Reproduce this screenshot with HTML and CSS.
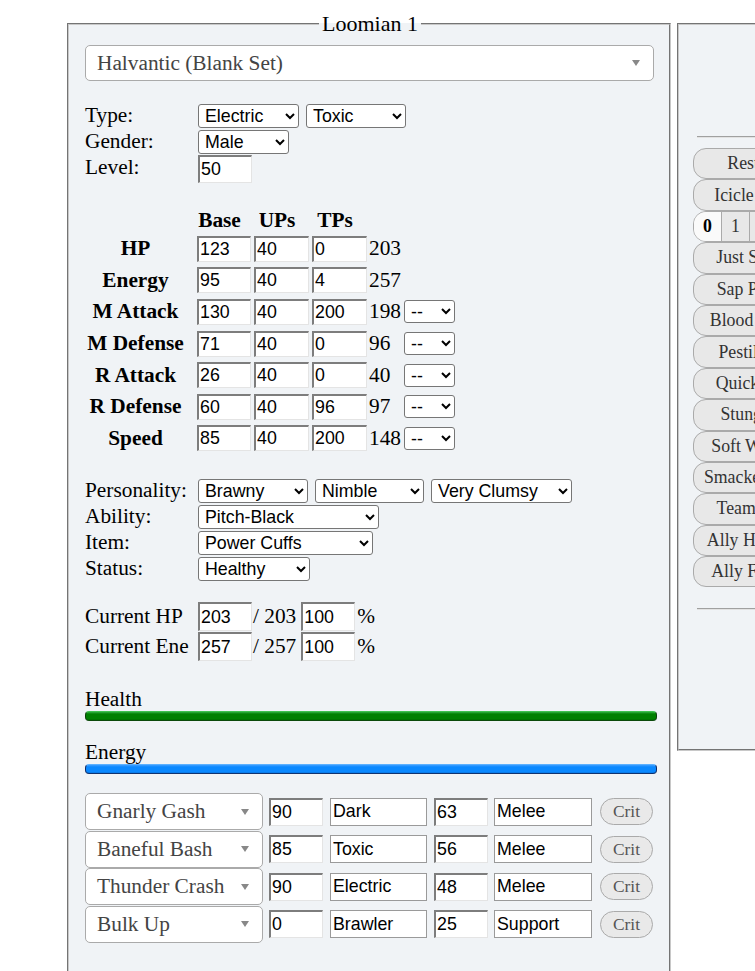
FILE: index.html
```html
<!DOCTYPE html>
<html lang="en">
<head>
<meta charset="utf-8">
<title>Loomian Calc</title>
<link rel="stylesheet" href="styles.css">
</head>
<body>
<div class="page">
  <fieldset class="poke">
    <legend>Loomian 1</legend>
    <div class="set-select"><span>Halvantic (Blank Set)</span><span class="tri"></span></div>

    <div class="info">
      <div class="row"><label>Type:</label><select class="sel w101"><option>Electric</option></select><select class="sel w100"><option>Toxic</option></select></div>
      <div class="row"><label>Gender:</label><select class="sel w91"><option>Male</option></select></div>
      <div class="row"><label>Level:</label><input class="inset lvl" type="text" value="50"></div>
    </div>

    <div class="stats">
      <div></div><div class="hd">Base</div><div class="hd">UPs</div><div class="hd">TPs</div><div></div><div></div>

      <div class="sl">HP</div><input class="inset" value="123"><input class="inset" value="40"><input class="inset" value="0"><div class="tot">203</div><div></div>
      <div class="sl">Energy</div><input class="inset" value="95"><input class="inset" value="40"><input class="inset" value="4"><div class="tot">257</div><div></div>
      <div class="sl">M Attack</div><input class="inset" value="130"><input class="inset" value="40"><input class="inset" value="200"><div class="tot">198</div><select class="sel boost"><option>--</option></select>
      <div class="sl">M Defense</div><input class="inset" value="71"><input class="inset" value="40"><input class="inset" value="0"><div class="tot">96</div><select class="sel boost"><option>--</option></select>
      <div class="sl">R Attack</div><input class="inset" value="26"><input class="inset" value="40"><input class="inset" value="0"><div class="tot">40</div><select class="sel boost"><option>--</option></select>
      <div class="sl">R Defense</div><input class="inset" value="60"><input class="inset" value="40"><input class="inset" value="96"><div class="tot">97</div><select class="sel boost"><option>--</option></select>
      <div class="sl">Speed</div><input class="inset" value="85"><input class="inset" value="40"><input class="inset" value="200"><div class="tot">148</div><select class="sel boost"><option>--</option></select>
    </div>

    <div class="info pers">
      <div class="row"><label>Personality:</label><select class="sel w110"><option>Brawny</option></select><select class="sel w109"><option>Nimble</option></select><select class="sel w141"><option>Very Clumsy</option></select></div>
      <div class="row"><label>Ability:</label><select class="sel w181"><option>Pitch-Black</option></select></div>
      <div class="row"><label>Item:</label><select class="sel w175"><option>Power Cuffs</option></select></div>
      <div class="row"><label>Status:</label><select class="sel w112"><option>Healthy</option></select></div>
    </div>

    <div class="current">
      <div class="crow"><label>Current HP</label><input class="inset cur" value="203"><span class="of">/ 203</span><input class="inset cur" value="100"><span class="pct">%</span></div>
      <div class="crow"><label>Current Ene</label><input class="inset cur" value="257"><span class="of">/ 257</span><input class="inset cur" value="100"><span class="pct">%</span></div>
    </div>

    <div class="barlabel first">Health</div>
    <div class="bar hp"></div>
    <div class="barlabel">Energy</div>
    <div class="bar en"></div>

    <div class="moves">
      <div class="mrow"><div class="msel"><span>Gnarly Gash</span><span class="tri"></span></div><input class="inset bp" value="90"><input class="thin mtype" value="Dark"><input class="inset bp acc" value="63"><input class="thin mcat" value="Melee"><button class="crit">Crit</button></div>
      <div class="mrow"><div class="msel"><span>Baneful Bash</span><span class="tri"></span></div><input class="inset bp" value="85"><input class="thin mtype" value="Toxic"><input class="inset bp acc" value="56"><input class="thin mcat" value="Melee"><button class="crit">Crit</button></div>
      <div class="mrow"><div class="msel"><span>Thunder Crash</span><span class="tri"></span></div><input class="inset bp" value="90"><input class="thin mtype" value="Electric"><input class="inset bp acc" value="48"><input class="thin mcat" value="Melee"><button class="crit">Crit</button></div>
      <div class="mrow"><div class="msel"><span>Bulk Up</span><span class="tri"></span></div><input class="inset bp" value="0"><input class="thin mtype" value="Brawler"><input class="inset bp acc" value="25"><input class="thin mcat" value="Support"><button class="crit">Crit</button></div>
    </div>
  </fieldset>

  <div class="field">
    <hr class="rule top">
    <div class="btns">
      <button class="fbtn">Restore Field</button>
      <button class="fbtn">Icicle Spike Trap</button>
      <div class="seg"><span class="on">0</span><span>1</span><span>2</span><span>3</span><span>4</span><span>5</span></div>
      <button class="fbtn">Just Switched In</button>
      <button class="fbtn">Sap Pod Planted</button>
      <button class="fbtn">Blood Pact Sealed</button>
      <button class="fbtn">Pestilence Field</button>
      <button class="fbtn">Quick Guard Up</button>
      <button class="fbtn">Stung Recently</button>
      <button class="fbtn">Soft Wind Barrier</button>
      <button class="fbtn">Smacked to Ground</button>
      <button class="fbtn">Team Protection</button>
      <button class="fbtn">Ally Helping Hand</button>
      <button class="fbtn">Ally Fainted Turn</button>
    </div>
    <hr class="rule bottom">
  </div>
</div>
</body>
</html>
```

FILE: styles.css
```css
html, body {
  margin: 0;
  padding: 0;
  background: #fff;
  overflow: hidden;
}
body {
  font-family: "Liberation Serif", "Times New Roman", serif;
  font-size: 21.33px;
  color: #000;
}
.page {
  display: flex;
  align-items: flex-start;
  gap: 6px;
  padding: 12px 0 0 67px;
  width: 1300px;
}
fieldset.poke {
  margin: 0;
  width: 604px;
  min-width: 0;
  min-inline-size: 0;
  flex: none;
  min-height: 1020px;
  box-sizing: border-box;
  padding: 9px 14px 40px 16px;
  border: 2px groove #c8c8c8;
  background: #f0f3f6;
}
legend {
  margin: 0 auto;
  padding: 0 3px;
  font-size: 22px;
  line-height: 24px;
}
.set-select, .msel {
  box-sizing: border-box;
  height: 36px;
  border: 1px solid #aaa;
  border-radius: 5px;
  background: #fff;
  color: #444;
  display: flex;
  align-items: center;
  justify-content: space-between;
  padding: 0 13px 0 11px;
}
.set-select {
  width: 569px;
}
.tri {
  width: 0;
  height: 0;
  border-left: 4.5px solid transparent;
  border-right: 4.5px solid transparent;
  border-top: 6px solid #888;
}
.info {
  margin-top: 21.5px;
}
.row, .crow {
  display: flex;
  align-items: center;
  gap: 7px;
  height: 26px;
}
.row label, .crow label {
  width: 106px;
  flex: none;
}
.sel {
  box-sizing: border-box;
  height: 24px;
  font-family: "Liberation Sans", Arial, sans-serif;
  font-size: 17.8px;
  color: #000;
  background: #fff;
  border: 1px solid #767676;
  border-radius: 3px;
  padding: 0 0 0 2px;
  margin: 0;
}
.w91 { width: 91px; }
.w100 { width: 100px; }
.w101 { width: 101px; }
.w109 { width: 109px; }
.w110 { width: 110px; }
.w112 { width: 112px; }
.w141 { width: 141px; }
.w175 { width: 175px; }
.w181 { width: 181px; }
.inset {
  box-sizing: border-box;
  margin: 0;
  background: #fff;
  border-style: solid;
  border-width: 2px 1px 1px 2px;
  border-color: #7d7d7d #e4e4e4 #e4e4e4 #7d7d7d;
  font-family: "Liberation Sans", Arial, sans-serif;
  font-size: 17.8px;
  color: #000;
  padding: 0 1px;
  outline: none;
}
.lvl {
  width: 54px;
  height: 28px;
  margin-top: 2px;
}
.stats {
  margin-top: 26.5px;
  display: grid;
  grid-template-columns: 109px 54px 55px 55px 31px 51px;
  grid-template-rows: 26px;
  grid-auto-rows: 31.6px;
  column-gap: 3px;
  align-items: center;
}
.stats .inset {
  width: 100%;
  height: 26px;
}
.hd {
  font-weight: bold;
  text-align: center;
  padding-right: 9px;
}
.sl {
  font-weight: bold;
  text-align: center;
  padding-right: 8px;
  white-space: nowrap;
}
.tot {
  margin-left: -1px;
  white-space: nowrap;
}
.boost {
  width: 51px;
  height: 23px;
}
.pers {
  margin-top: 23.8px;
}
.current {
  margin-top: 20px;
}
.crow {
  height: 30px;
  gap: 0;
}
.crow label {
  width: 113px;
}
.cur {
  width: 54px;
  height: 29px;
}
.of {
  margin: 0 5px 0 1px;
}
.pct {
  margin-left: 2px;
}
.barlabel {
  height: 24px;
  line-height: 24px;
  margin-top: 19px;
}
.barlabel.first {
  margin-top: 25px;
}
.bar {
  width: 572px;
  height: 10px;
  box-sizing: border-box;
  border-radius: 4px;
  border: 1px solid;
}
.hp {
  border-color: #3fc14f #0b3f0b #0b4a0b #0b3f0b;
  background: linear-gradient(#2fae3f 0, #008000 2px, #008000 7px, #006800 100%);
}
.en {
  border-color: #5ab0ff #0d2a66 #0f3270 #0d2a66;
  background: linear-gradient(#3d9dff 0, #0a88ff 2px, #0a88ff 7px, #0870d6 100%);
}
.moves {
  margin-top: 19px;
}
.mrow {
  display: flex;
  align-items: center;
  height: 37.5px;
}
.msel {
  width: 178px;
  height: 37px;
  flex: none;
}
.bp {
  width: 54px;
  height: 28px;
  margin-left: 6px;
}
.acc {
  margin-left: 7px;
}
.thin {
  box-sizing: border-box;
  height: 28px;
  margin: 0 0 0 7px;
  background: #fff;
  border: 1px solid #9a9a9a;
  font-family: "Liberation Sans", Arial, sans-serif;
  font-size: 17.8px;
  color: #000;
  padding: 0 2px;
  outline: none;
}
.mtype { width: 97px; }
.mcat { width: 98px; margin-left: 6px; }
.crit {
  box-sizing: border-box;
  width: 53px;
  height: 27px;
  margin-left: 8px;
  border: 1px solid #aaa;
  border-radius: 13.5px;
  background: #e9e9e9;
  color: #555;
  font-family: "Liberation Serif", "Times New Roman", serif;
  font-size: 17.4px;
  padding: 0;
}
.field {
  box-sizing: border-box;
  width: 320px;
  flex: none;
  height: 728px;
  margin-top: 11px;
  border: 2px groove #c8c8c8;
  background: #f0f3f6;
  padding: 0 0 0 18px;
}
.rule {
  margin: 0;
  height: 0;
  border: 0;
  border-top: 1px solid #a0a0a0;
  border-bottom: 1px solid #e2e2e2;
}
.rule.top {
  margin-top: 111px;
}
.rule.bottom {
  margin-top: 21px;
}
.btns {
  margin: 10px 0 0 -4px;
  width: 164px;
  display: flex;
  flex-direction: column;
}
.fbtn, .seg {
  box-sizing: border-box;
  height: 31.4px;
  width: 164px;
  border: 1px solid #aaa;
  border-radius: 13px;
  background: #e8e8e8;
  color: #333;
  font-family: "Liberation Serif", "Times New Roman", serif;
  font-size: 17.8px;
  padding: 0;
  white-space: nowrap;
  text-align: center;
}
.seg {
  display: flex;
  overflow: hidden;
}
.seg span {
  flex: none;
  width: 28px;
  display: flex;
  align-items: center;
  justify-content: center;
  border-right: 1px solid #aaa;
  box-sizing: border-box;
}
.seg span.on {
  background: #fafafa;
  font-weight: bold;
  color: #000;
}
```
